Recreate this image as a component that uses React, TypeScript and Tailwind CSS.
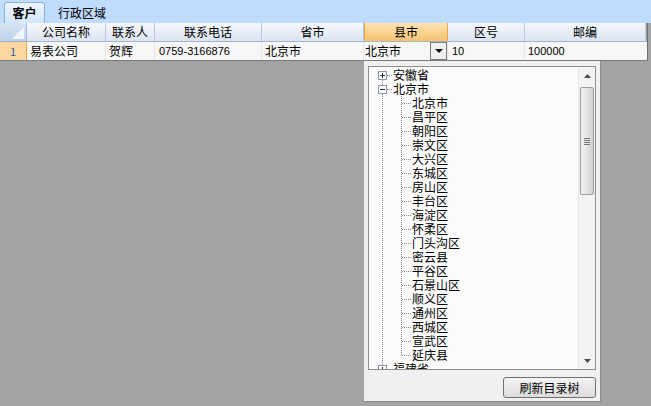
import React from "react";

const cols = [
  { key: "rn", w: "w-[27px]", label: "" },
  { key: "name", w: "w-[79px]", label: "公司名称" },
  { key: "contact", w: "w-[49px]", label: "联系人" },
  { key: "phone", w: "w-[107px]", label: "联系电话" },
  { key: "prov", w: "w-[102px]", label: "省市" },
  { key: "city", w: "w-[84px]", label: "县市" },
  { key: "area", w: "w-[77px]", label: "区号" },
  { key: "zip", w: "w-[121px]", label: "邮编" },
];

const children = [
  "北京市",
  "昌平区",
  "朝阳区",
  "崇文区",
  "大兴区",
  "东城区",
  "房山区",
  "丰台区",
  "海淀区",
  "怀柔区",
  "门头沟区",
  "密云县",
  "平谷区",
  "石景山区",
  "顺义区",
  "通州区",
  "西城区",
  "宣武区",
  "延庆县",
];

const font = "font-['Noto_Sans_CJK_SC','Noto_Sans',sans-serif]";
const numFont = "font-['Liberation_Sans','Noto_Sans_CJK_SC',sans-serif]";

function ExpandBox({ open }: { open: boolean }) {
  return (
    <g>
      <rect x="9.5" y="3.5" width="8" height="8" fill="#fdfdfd" stroke="#8a98a8" />
      <line x1="11" y1="7.5" x2="16" y2="7.5" stroke="#2b2b2b" />
      {!open && <line x1="13.5" y1="5" x2="13.5" y2="10" stroke="#2b2b2b" />}
    </g>
  );
}

function RootRow({ label, open, top, bottom }: { label: string; open: boolean; top: boolean; bottom: boolean }) {
  return (
    <div className="flex h-[14px] items-center">
      <svg width="24" height="14" className="shrink-0">
        {top && <line x1="13.5" y1="0" x2="13.5" y2="4" stroke="#8c8c8c" strokeDasharray="1 1" />}
        {bottom && <line x1="13.5" y1="12" x2="13.5" y2="14" stroke="#8c8c8c" strokeDasharray="1 1" />}
        <line x1="18" y1="7.5" x2="23" y2="7.5" stroke="#8c8c8c" strokeDasharray="1 1" />
        <ExpandBox open={open} />
      </svg>
      <span className="text-[12px] leading-[14px] text-black whitespace-nowrap">{label}</span>
    </div>
  );
}

function ChildRow({ label, last }: { label: string; last: boolean }) {
  return (
    <div className="flex h-[14px] items-center">
      <svg width="43" height="14" className="shrink-0">
        <line x1="13.5" y1="0" x2="13.5" y2="14" stroke="#8c8c8c" strokeDasharray="1 1" />
        <line x1="32.5" y1="0" x2="32.5" y2={last ? 8 : 14} stroke="#8c8c8c" strokeDasharray="1 1" />
        <line x1="33" y1="7.5" x2="42" y2="7.5" stroke="#8c8c8c" strokeDasharray="1 1" />
      </svg>
      <span className="text-[12px] leading-[14px] text-black whitespace-nowrap">{label}</span>
    </div>
  );
}

function Scrollbar() {
  return (
    <div className="w-[17px] shrink-0 flex flex-col bg-[#f3f3f3] border-l border-[#e6e6e6]">
      <div className="h-[17px] flex items-center justify-center">
        <svg width="7" height="4">
          <polygon points="3.5,0 7,4 0,4" fill="#4a4a4a" />
        </svg>
      </div>
      <div className="h-[3px]" />
      <div className="h-[108px] mx-[1px] rounded-[2px] border border-[#9c9c9c] bg-gradient-to-r from-[#f2f2f2] via-[#e4e4e4] to-[#cfcfcf] flex flex-col items-center justify-center gap-[1px]">
        <div className="w-[6px] h-px bg-[#777]" />
        <div className="w-[6px] h-px bg-[#777]" />
        <div className="w-[6px] h-px bg-[#777]" />
        <div className="w-[6px] h-px bg-[#777]" />
      </div>
      <div className="flex-1" />
      <div className="h-[17px] flex items-center justify-center">
        <svg width="7" height="4">
          <polygon points="0,0 7,0 3.5,4" fill="#4a4a4a" />
        </svg>
      </div>
    </div>
  );
}

function TreePopup() {
  return (
    <div className="absolute left-[364px] top-[61px] w-[237px] h-[341px] bg-[#f0f0f0] border-r border-b border-[#8d8d8d] flex flex-col pl-[4px] pr-[4px] pt-[5px]">
      <div className="w-[228px] h-[304px] border border-[#8f8f8f] bg-[#fbfbfb] flex overflow-hidden">
        <div className="flex-1 overflow-hidden pt-[1px]">
          <RootRow label="安徽省" open={false} top={false} bottom />
          <RootRow label="北京市" open top bottom />
          {children.map((c, i) => (
            <ChildRow key={c} label={c} last={i === children.length - 1} />
          ))}
          <RootRow label="福建省" open={false} top bottom />
        </div>
        <Scrollbar />
      </div>
      <div className="flex justify-end mt-[7px]">
        <button className="w-[93px] h-[21px] rounded-[3px] border border-[#707070] bg-gradient-to-b from-[#f4f4f4] to-[#dcdcdc] text-[12px] leading-[19px] text-black">
          刷新目录树
        </button>
      </div>
    </div>
  );
}

export default function App() {
  return (
    <div className={`relative w-[651px] h-[406px] overflow-hidden bg-[#a3a3a3] ${font}`}>
      {/* tabs */}
      <div className="h-[23px] bg-[#bfdbfe] flex items-end pl-[4px] gap-[13px]">
        <div className="w-[41px] h-[21px] rounded-t-[3px] border border-b-0 border-[#8eb1dc] bg-gradient-to-b from-[#eef5fe] to-[#d4e6fc] flex items-center justify-center text-[12px] font-bold text-black">
          客户
        </div>
        <div className="h-[21px] flex items-center text-[12px] text-black">行政区域</div>
      </div>

      {/* grid */}
      <div className="w-[648px] border-r border-[#6f6f6f]">
        <div className="flex h-[19px] border-b border-[#9fb5d0]">
          {cols.map((c) =>
            c.key === "rn" ? (
              <div key={c.key} className={`${c.w} h-full bg-gradient-to-b from-[#d9e5f4] to-[#bcd0ea] border-r border-[#a9bed8] relative`}>
                <svg width="12" height="12" className="absolute right-[2px] bottom-[2px]">
                  <polygon points="12,0 12,12 0,12" fill="#f1f5fb" />
                </svg>
              </div>
            ) : c.key === "city" ? (
              <div key={c.key} className={`${c.w} h-full bg-gradient-to-b from-[#fce3b4] to-[#f6c36f] border-x border-[#f2a23f] flex items-center justify-center text-[12px]`}>
                {c.label}
              </div>
            ) : (
              <div key={c.key} className={`${c.w} h-full bg-gradient-to-b from-[#f6f8fc] to-[#dbe4f1] border-r border-[#b9cbe2] flex items-center justify-center text-[12px] text-black`}>
                {c.label}
              </div>
            )
          )}
        </div>
        <div className="flex h-[19px] bg-[#f7f7f7] border-b border-[#7a7a7a] text-[12px] text-black">
          <div className="w-[27px] h-full bg-[#fbd6a0] border-r border-[#f2a23f] flex items-center justify-center text-[#2c5aa8] text-[11px]">
            1
          </div>
          <div className="w-[79px] h-full border-r border-[#e6e6e6] pl-[3px] flex items-center">易表公司</div>
          <div className="w-[49px] h-full border-r border-[#e6e6e6] pl-[3px] flex items-center">贺辉</div>
          <div className={`w-[107px] h-full border-r border-[#e6e6e6] pl-[4px] flex items-center text-[11px] ${numFont}`}>
            0759-3166876
          </div>
          <div className="w-[102px] h-full border-r border-[#e6e6e6] pl-[3px] flex items-center">北京市</div>
          <div className="w-[84px] h-full border-r border-[#e6e6e6] pl-[1px] flex items-center justify-between">
            <span>北京市</span>
            <div className="w-[17px] h-[18px] border border-[#7d7d7d] bg-[#f0f0f0] flex items-center justify-center">
              <svg width="8" height="4">
                <polygon points="0,0 8,0 4,4" fill="#111" />
              </svg>
            </div>
          </div>
          <div className={`w-[77px] h-full border-r border-[#e6e6e6] pl-[4px] flex items-center text-[11px] ${numFont}`}>10</div>
          <div className={`w-[121px] h-full pl-[3px] flex items-center text-[11px] ${numFont}`}>100000</div>
        </div>
      </div>

      <TreePopup />
    </div>
  );
}
